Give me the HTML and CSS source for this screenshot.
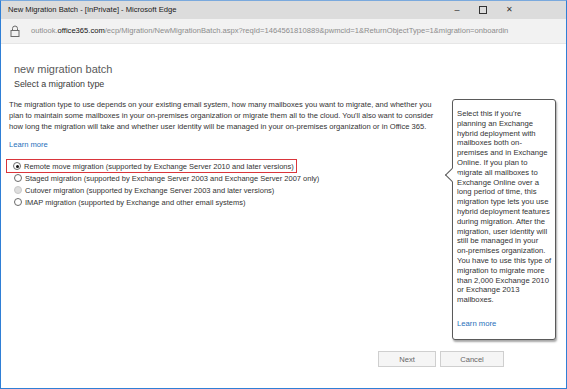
FILE: index.html
```html
<!DOCTYPE html>
<html lang="en">

<head>
    <meta charset="UTF-8">
    <title>New Migration Batch</title>
    <link rel="stylesheet" href="styles.css">
</head>

<body>
    <div class="window">
        <div class="titlebar">
            <span class="title">New Migration Batch - [InPrivate] - Microsoft Edge</span>
            <div class="controls">
                <span class="ctl">&#8211;</span>
                <span class="ctl"><span class="maxbox"></span></span>
                <span class="ctl close">&#10005;</span>
            </div>
        </div>
        <div class="addressbar">
            <svg class="lock" width="10" height="12" viewBox="0 0 10 12">
                <path d="M2.5 5.5V3.5a2.5 2.5 0 0 1 5 0v2" fill="none" stroke="#6b6b6b" stroke-width="1" />
                <rect x="1" y="5.5" width="8" height="6" fill="none" stroke="#6b6b6b" stroke-width="1" />
            </svg>
            <span class="url">outlook.<b>office365.com</b>/ecp/Migration/NewMigrationBatch.aspx?reqId=1464561810889&amp;pwmcid=1&amp;ReturnObjectType=1&amp;migration=onboardin</span>
        </div>
        <div class="page">
            <div class="main">
                <h1>new migration batch</h1>
                <h2>Select a migration type</h2>
                <p class="intro">The migration type to use depends on your existing email system, how many mailboxes you want to migrate, and whether you<br>plan to maintain some mailboxes in your on-premises organization or migrate them all to the cloud. You'll also want to consider<br>how long the migration will take and whether user identity will be managed in your on-premises organization or in Office 365.</p>
                <a class="link" href="#">Learn more</a>
                <div class="options">
                    <label class="option selected"><span class="radio checked"></span>Remote move migration (supported by Exchange Server 2010 and later versions)</label>
                    <label class="option"><span class="radio"></span>Staged migration (supported by Exchange Server 2003 and Exchange Server 2007 only)</label>
                    <label class="option"><span class="radio disabled"></span>Cutover migration (supported by Exchange Server 2003 and later versions)</label>
                    <label class="option"><span class="radio"></span>IMAP migration (supported by Exchange and other email systems)</label>
                </div>
            </div>
            <div class="callout">
                <p>Select this if you're<br>planning an Exchange<br>hybrid deployment with<br>mailboxes both on-<br>premises and in Exchange<br>Online. If you plan to<br>migrate all mailboxes to<br>Exchange Online over a<br>long period of time, this<br>migration type lets you use<br>hybrid deployment features<br>during migration. After the<br>migration, user identity will<br>still be managed in your<br>on-premises organization.<br>You have to use this type of<br>migration to migrate more<br>than 2,000 Exchange 2010<br>or Exchange 2013<br>mailboxes.</p>
                <a class="link" href="#">Learn more</a>
            </div>
        </div>
        <div class="footer">
            <button>Next</button>
            <button class="cancel">Cancel</button>
        </div>
    </div>
</body>

</html>
```

FILE: styles.css
```css
:root {
    --border: #2f7fd6;
    --title: #dcdcdc;
    --address: #f2f2f2;
    --text: #333333;
    --muted: #8a8a8a;
    --link: #1f6fba;
    --font: "Liberation Sans", Arial, sans-serif;
}

html,
body {
    margin: 0;
    height: 100%;
}

body {
    font-family: var(--font);
    color: var(--text);
    background-color: #ffffff;
}

.window {
    height: 389px;
    box-sizing: border-box;
    border: 1px solid var(--border);
    border-top: 1px solid #7aa9dd;
    display: flex;
    flex-direction: column;
    background-color: #ffffff;
}

.titlebar {
    height: 18px;
    background-color: var(--title);
    display: flex;
    align-items: center;
    justify-content: space-between;
    padding-left: 7px;
}

.title {
    font-size: 7.6px;
    color: #1a1a1a;
}

.controls {
    display: flex;
    height: 100%;
    padding-right: 44px;
}

.ctl {
    width: 26px;
    display: flex;
    align-items: center;
    justify-content: center;
    font-size: 9px;
    color: #333333;
}

.close {
    font-size: 8px;
}

.maxbox {
    width: 6px;
    height: 6px;
    border: 1px solid #333333;
}

.addressbar {
    height: 25px;
    background-color: var(--address);
    display: flex;
    align-items: center;
    gap: 11px;
    padding-left: 9px;
    border-bottom: 1px solid #e6e6e6;
    white-space: nowrap;
}

.lock {
    flex: 0 0 auto;
}

.url {
    font-size: 7.6px;
    color: #8c8c8c;
}

.url b {
    font-weight: normal;
    color: #111111;
}

.page {
    display: flex;
    flex: 1;
}

.main {
    flex: 1;
    padding: 19px 0 0 8px;
}

h1 {
    font-size: 11px;
    font-weight: normal;
    color: #5a5a5a;
    margin: 0 0 4px 5px;
}

h2 {
    font-size: 8.9px;
    font-weight: normal;
    color: #3a3a3a;
    margin: 0 0 10px 5px;
}

.intro {
    font-size: 7.6px;
    line-height: 11px;
    margin: 0 0 8px;
    white-space: nowrap;
}

.link {
    display: block;
    font-size: 7.6px;
    color: var(--link);
    text-decoration: none;
}

.options {
    margin-top: 10px;
    margin-left: -3px;
    display: flex;
    flex-direction: column;
    align-items: flex-start;
}

.option {
    display: flex;
    align-items: center;
    gap: 3px;
    font-size: 7.5px;
    height: 12px;
    padding-left: 8px;
    white-space: nowrap;
    box-sizing: border-box;
}

.option.selected {
    height: 14px;
    border: 1.5px solid #d9353b;
    padding: 0 2px 0 6px;
    margin-bottom: -1px;
}

.radio {
    width: 6px;
    height: 6px;
    border-radius: 50%;
    border: 1px solid #6a6a6a;
    background-color: #ffffff;
    position: relative;
    flex: 0 0 auto;
}

.radio.checked::before {
    content: "";
    position: absolute;
    left: 1.5px;
    top: 1.5px;
    width: 3px;
    height: 3px;
    border-radius: 50%;
    background-color: #111111;
}

.radio.disabled {
    border-color: #c8c8c8;
    background-color: #dedede;
}

.callout {
    align-self: flex-start;
    width: 98px;
    margin: 55px 10px 0 0;
    padding: 9px 0 10px 4px;
    border: 1px solid #5a5a5a;
    border-radius: 3px;
    box-shadow: 1px 2px 2px rgba(0, 0, 0, 0.35);
    position: relative;
    background-color: #ffffff;
}

.callout::before {
    content: "";
    position: absolute;
    left: -6px;
    top: 70px;
    width: 9px;
    height: 9px;
    background-color: #ffffff;
    border-left: 1px solid #5a5a5a;
    border-bottom: 1px solid #5a5a5a;
    transform: rotate(45deg);
}

.callout p {
    font-size: 7.7px;
    line-height: 9.8px;
    margin: 0 0 14px;
    white-space: nowrap;
}

.callout .link {
    font-size: 7.7px;
    line-height: 10px;
}

.footer {
    display: flex;
    justify-content: flex-end;
    gap: 4px;
    padding: 11px 62px 21px 0;
}

button {
    width: 58px;
    height: 16px;
    border: 1px solid #cfcfcf;
    background-color: #f5f5f5;
    font-family: var(--font);
    font-size: 7.6px;
    color: #666666;
    padding: 0;
}

button.cancel {
    width: 64px;
}
```
